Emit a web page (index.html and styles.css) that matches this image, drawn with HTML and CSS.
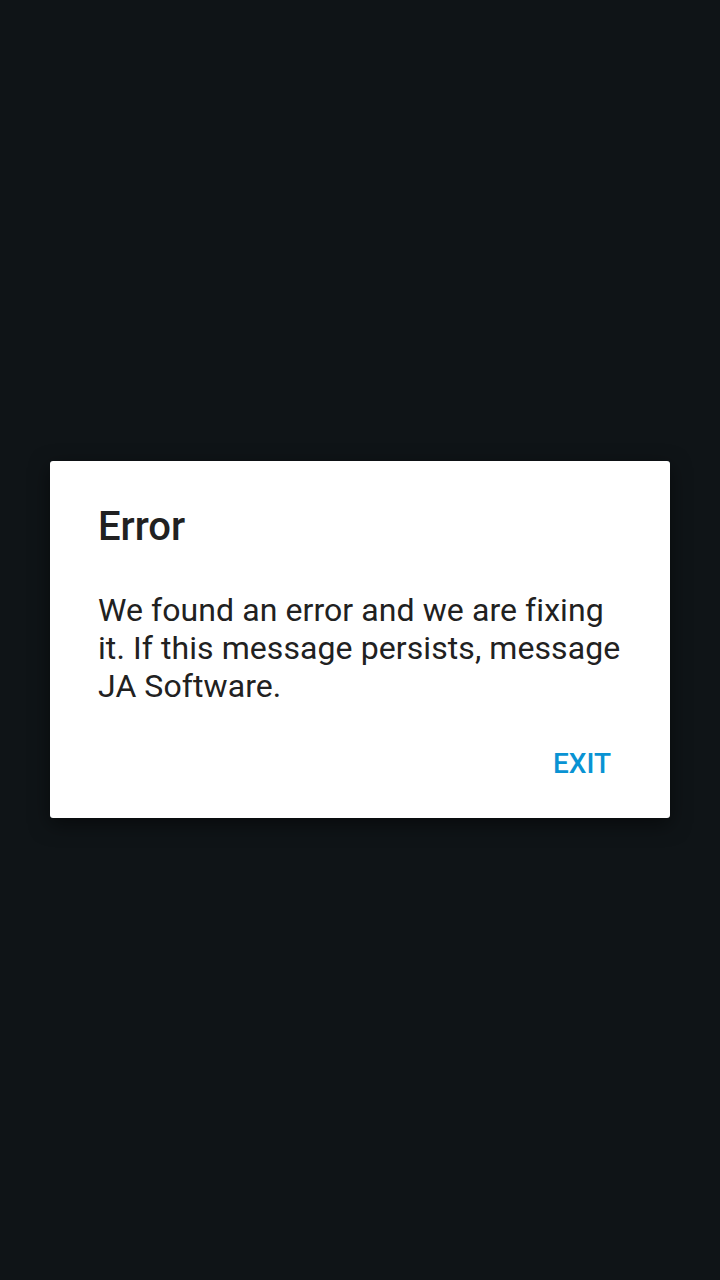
FILE: index.html
```html
<!DOCTYPE html>
<html lang="en">
<head>
    <meta charset="UTF-8">
    <meta name="viewport" content="width=device-width, initial-scale=1.0">
    <title>Error</title>
    <link rel="stylesheet" href="styles.css">
</head>
<body>
    <div class="screen">
        <div class="dialog">
            <h1 class="dialog-title">Error</h1>
            <p class="dialog-message">We found an error and we are fixing it. If this message persists, message JA Software.</p>
            <div class="dialog-actions">
                <button class="dialog-button">EXIT</button>
            </div>
        </div>
    </div>
</body>
</html>
```

FILE: styles.css
```css
body {
    margin: 0;
    padding: 0;
    background-color: #0f1417;
    font-family: Roboto, 'Noto Sans', sans-serif;
}

.screen {
    height: 100vh;
    display: flex;
    align-items: center;
    justify-content: center;
}

.dialog {
    width: 620px;
    box-sizing: border-box;
    background: #ffffff;
    border-radius: 3px;
    padding: 42px 0 38px 0;
    margin-top: -2px;
    box-shadow: 0 6px 20px rgba(0, 0, 0, 0.5);
}

.dialog-title {
    margin: 0 48px;
    font-size: 40px;
    line-height: 47px;
    font-weight: 500;
    color: #212121;
}

.dialog-message {
    margin: 41px 48px 0 48px;
    font-size: 32px;
    line-height: 38px;
    font-weight: 400;
    letter-spacing: 0.08px;
    color: #212121;
}

.dialog-actions {
    display: flex;
    justify-content: flex-end;
    margin-top: 43px;
    padding-right: 59px;
}

.dialog-button {
    background: none;
    border: none;
    padding: 0;
    font-family: Roboto, 'Noto Sans', sans-serif;
    font-size: 28px;
    line-height: 32px;
    font-weight: 500;
    color: #0993d3;
    cursor: pointer;
}
```
